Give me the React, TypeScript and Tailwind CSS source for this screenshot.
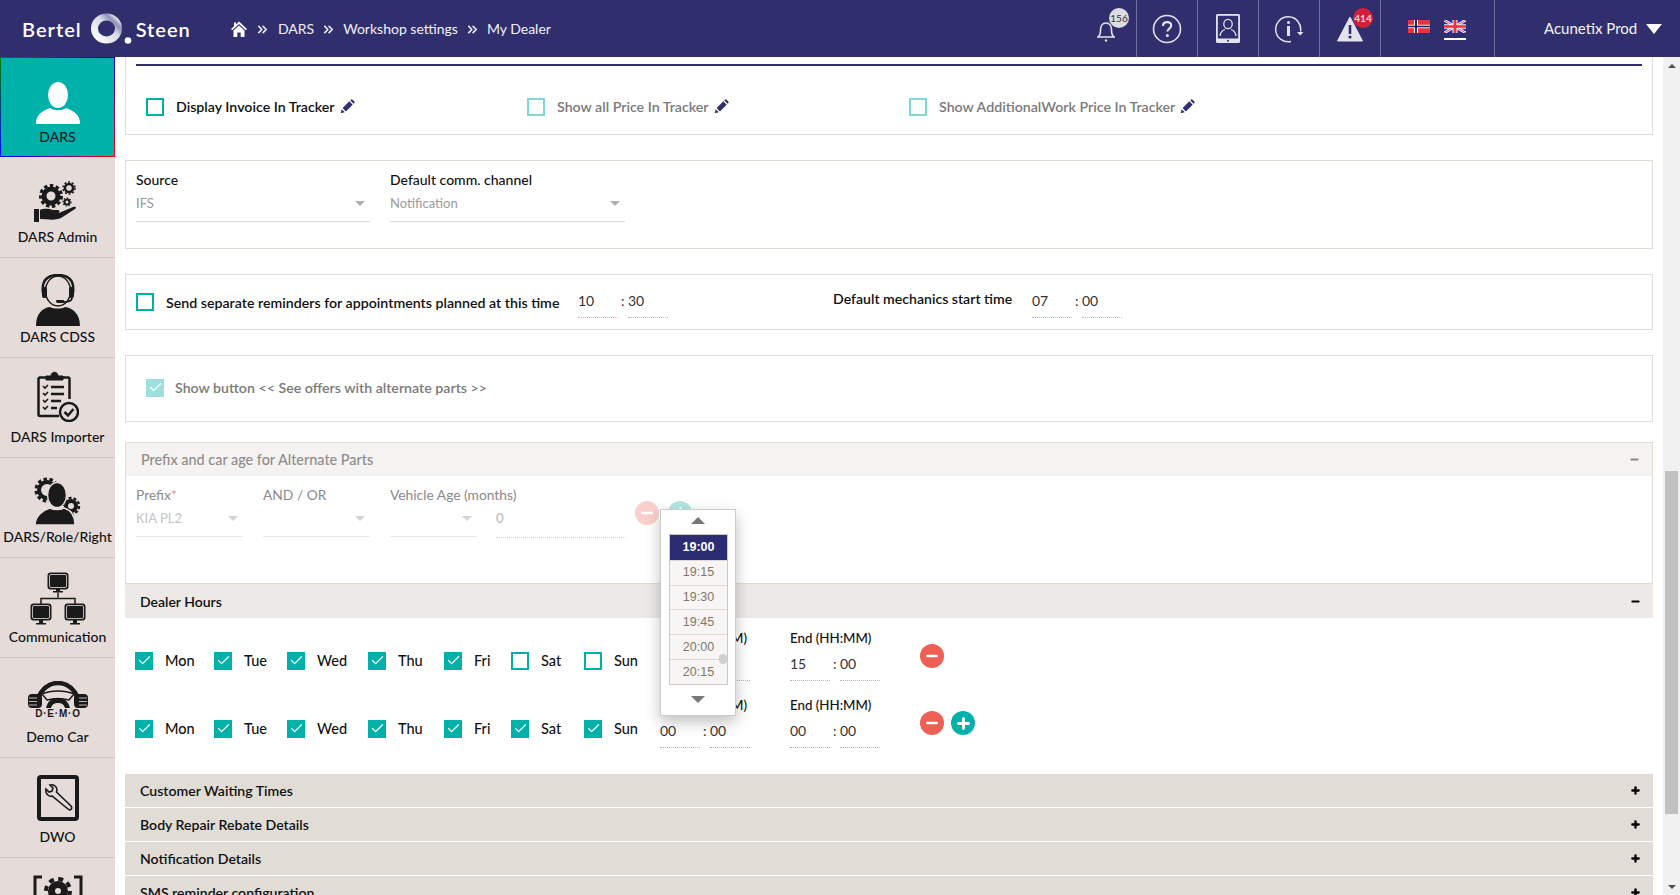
import React from "react";
import { Minus, Plus, Check, ChevronsRight } from "lucide-react";

const FONT = "font-['Lato','Noto_Sans',sans-serif]";

function Bell() {
  return (
    <svg width="18" height="26" viewBox="0 0 18 26" fill="none" stroke="#e3e3ee" strokeWidth="1.6">
      <path d="M1 20c2-1.5 2.5-3 2.5-7 0-4 2-7 5.5-7s5.5 3 5.5 7c0 4 .5 5.5 2.500 7z" />
      <circle cx="9" cy="23.5" r="1.2" fill="#e3e3ee" stroke="none" />
    </svg>
  );
}

function Help() {
  return (
    <svg width="30" height="30" viewBox="0 0 30 30" fill="none" stroke="#e3e3ee" strokeWidth="1.6">
      <circle cx="15" cy="15" r="13.5" />
      <path d="M11 12c0-2.5 2-3.800 4.200-3.800 2.300 0 4 1.400 4 3.400 0 3-3.800 3-3.800 6" strokeWidth="2.2" />
      <circle cx="15.4" cy="21.5" r="1.5" fill="#e3e3ee" stroke="none" />
    </svg>
  );
}

function Tablet() {
  return (
    <svg width="24" height="29" viewBox="0 0 24 29">
      <rect x="0" y="0" width="24" height="29" rx="1.5" fill="#e3e3ee" />
      <rect x="1.8" y="1.8" width="20.4" height="22.7" fill="#312e6e" />
      <circle cx="12" cy="26.8" r="1" fill="#312e6e" />
      <g fill="none" stroke="#e3e3ee" strokeWidth="1.3">
        <ellipse cx="12" cy="10" rx="4.2" ry="4.7" />
        <path d="M4 22c.5-4 3.500-6 5-6.500M20 22c-.5-4-3.500-6-5-6.500" />
      </g>
    </svg>
  );
}

function InfoLoop() {
  return (
    <svg width="29" height="28" viewBox="0 0 29 28" fill="none" stroke="#e3e3ee" strokeWidth="1.5">
      <path d="M25.5 16.5A12.5 12.5 0 1 0 16 26.500" />
      <path d="M22 17h6.500l-3.200 3.500z" fill="#e3e3ee" stroke="none" />
      <circle cx="13.5" cy="7.5" r="1.5" fill="#e3e3ee" stroke="none" />
      <rect x="12" y="11" width="3" height="10" fill="#e3e3ee" stroke="none" />
    </svg>
  );
}

function Warn() {
  return (
    <svg width="26" height="26" viewBox="0 0 26 26">
      <path d="M13 1 L25.5 25 H.5Z" fill="#e3e3ee" stroke="#e3e3ee" strokeLinejoin="round" />
      <rect x="11.7" y="9" width="2.6" height="9" fill="#312e6e" />
      <circle cx="13" cy="21" r="1.6" fill="#312e6e" />
    </svg>
  );
}

function FlagNo() {
  return (
    <svg width="22" height="13" viewBox="0 0 22 15" preserveAspectRatio="none">
      <rect width="22" height="15" fill="#e5343e" />
      <rect x="6" width="4" height="15" fill="#fff" />
      <rect y="5.5" width="22" height="4" fill="#fff" />
      <rect x="7" width="2" height="15" fill="#1d2a66" />
      <rect y="6.5" width="22" height="2" fill="#1d2a66" />
    </svg>
  );
}

function FlagUk() {
  return (
    <svg width="22" height="13" viewBox="0 0 22 15" preserveAspectRatio="none" className="block">
      <rect width="22" height="15" fill="#1c2bb0" />
      <path d="M0 0L22 15M22 0L0 15" stroke="#fff" strokeWidth="3" />
      <path d="M0 0L22 15M22 0L0 15" stroke="#e5343e" strokeWidth="1" />
      <rect x="8.5" width="5" height="15" fill="#fff" />
      <rect y="5" width="22" height="5" fill="#fff" />
      <rect x="9.5" width="3" height="15" fill="#e5343e" />
      <rect y="6" width="22" height="3" fill="#e5343e" />
    </svg>
  );
}

function HomeIcon() {
  return (
    <svg width="16" height="16" viewBox="0 0 16 16" fill="#fff">
      <path d="M8 .5 16 8l-1.200 1.200L8 3 1.200 9.200 0 8l3-2.800V1.500h2v1.900z" />
      <path d="M8 4.500 13.500 9.500V16h-3.800v-4.500H6.300V16H2.500V9.500z" />
    </svg>
  );
}

function Logo() {
  return (
    <div className="flex items-center text-[20px] font-semibold leading-none tracking-[1px] text-white">
      <span>Bertel</span>
      <svg width="44" height="32" viewBox="0 0 44 32" className="ml-[9px] mr-[1px]">
        <defs>
          <linearGradient id="ring" x1="0" y1="1" x2="1" y2="0">
            <stop offset="0" stopColor="#ffffff" />
            <stop offset="0.6" stopColor="#d8d8e8" />
            <stop offset="0.8" stopColor="#8f8fb8" />
            <stop offset="1" stopColor="#ffffff" />
          </linearGradient>
        </defs>
        <ellipse cx="15.5" cy="15.5" rx="12" ry="11.5" fill="none" stroke="url(#ring)" strokeWidth="7" />
        <circle cx="37" cy="27.5" r="3.3" fill="#fff" />
      </svg>
      <span>Steen</span>
    </div>
  );
}

function TopBar() {
  const cell = "relative flex h-full w-[61px] items-center justify-center border-r border-[#6f6e9d]";
  const sep = "mx-[7px] mt-[2px]";
  return (
    <header className="flex h-[57px] shrink-0 items-center bg-[#312e6e] text-white">
      <div className="flex w-[231px] pl-[22px]">
        <Logo />
      </div>
      <nav className="flex items-center text-[14px] text-[#f1f1f7]">
        <HomeIcon />
        <ChevronsRight size={15} className="mx-[8px] mt-[2px]" strokeWidth={2.5} />
        <span>DARS</span>
        <ChevronsRight size={15} className={sep} strokeWidth={2.5} />
        <span>Workshop settings</span>
        <ChevronsRight size={15} className={sep} strokeWidth={2.5} />
        <span>My Dealer</span>
      </nav>
      <div className="ml-auto flex h-full items-center">
        <div className={cell}>
          <div className="mt-[3px]">
            <Bell />
          </div>
          <span className="absolute right-[7px] top-[8px] flex h-[20px] w-[20px] items-center justify-center rounded-full bg-[#dcdce4] text-[10px] text-[#333]">
            156
          </span>
        </div>
        <div className={cell}>
          <Help />
        </div>
        <div className={cell}>
          <Tablet />
        </div>
        <div className={cell}>
          <InfoLoop />
        </div>
        <div className={cell}>
          <Warn />
          <span className="absolute right-[7px] top-[8px] flex h-[20px] w-[20px] items-center justify-center rounded-full bg-[#d3203a] text-[10px] font-bold text-[#f0d9dd]">
            414
          </span>
        </div>
        <div className="flex h-full w-[114px] items-start gap-[14px] border-r border-[#6f6e9d] pl-[27px] pt-[20px]">
          <FlagNo />
          <div className="border-b-2 border-white pb-[5px]">
            <FlagUk />
          </div>
        </div>
        <div className="flex w-[185px] items-center pl-[49px] text-[15px] text-[#f4f4f8]">
          <span>Acunetix Prod</span>
          <span className="ml-[9px] h-0 w-0 border-x-[8px] border-t-[10px] border-x-transparent border-t-white" />
        </div>
      </div>
    </header>
  );
}

const icons: Record<string, React.ReactNode> = {
  admin: (
    <svg width="48" height="42" viewBox="0 0 48 42" fill="#1a1a1a" className="mb-[4px]">
      <circle cx="17" cy="15" r="7" fill="none" stroke="#1a1a1a" strokeWidth="5" />
      <circle cx="17" cy="15" r="10.5" fill="none" stroke="#1a1a1a" strokeWidth="3" strokeDasharray="3.5 2.5" />
      <circle cx="35" cy="7" r="4" fill="none" stroke="#1a1a1a" strokeWidth="2.5" />
      <circle cx="35" cy="7" r="6" fill="none" stroke="#1a1a1a" strokeWidth="1.5" strokeDasharray="2 1.8" />
      <circle cx="33" cy="21" r="2.5" fill="none" stroke="#1a1a1a" strokeWidth="2" />
      <circle cx="33" cy="21" r="4" fill="none" stroke="#1a1a1a" strokeWidth="1.2" strokeDasharray="1.5 1.5" />
      <path d="M0 28h5v13H0zM6 29c5-2 9-1 13 0h5c2 0 2 3 0 3h-6 7l14-6c3-1 4 1 2 2L27 37c-7 3-14 1-21 1z" />
    </svg>
  ),
  cdss: (
    <svg width="44" height="52" viewBox="0 0 44 52" fill="#1a1a1a" className="mb-[1px]">
      <path d="M0 52c0-12 6-18 14-19 3 2 12 2 15 0 8 1 15 7 15 19H1z" />
      <ellipse cx="22" cy="17" rx="12.5" ry="15" fill="none" stroke="#1a1a1a" strokeWidth="1.5" />
      <path d="M7 19C5 5 13 1 22 1s17 4 15 18" fill="none" stroke="#1a1a1a" strokeWidth="2.5" />
      <rect x="6" y="13" width="5" height="11" rx="2" />
      <rect x="33" y="13" width="5" height="11" rx="2" />
      <path d="M36 24c0 3-4 4-9 4h-6" fill="none" stroke="#1a1a1a" strokeWidth="1.8" />
      <rect x="20" y="26" width="8" height="2.5" rx="1" />
    </svg>
  ),
  importer: (
    <svg width="42" height="52" viewBox="0 0 42 52" fill="none" stroke="#1a1a1a" className="mb-[5px]">
      <path d="M22 46H3a1.500 1.500 0 0 1-1.500-1.500V9A1.500 1.500 0 0 1 3 7.500h28A1.500 1.500 0 0 1 32.500 9v20" strokeWidth="2.5" />
      <path d="M9 10V6h5c0-5 7-5 7 0h5v4z" fill="#1a1a1a" strokeWidth="1" />
      <path d="M6 16l2 2 3-3M6 23l2 2 3-3M6 30l2 2 3-3M6 37l2 2 3-3" strokeWidth="1.6" />
      <path d="M14 17h13M14 24h13M14 31h10M14 38h6" strokeWidth="2.4" />
      <circle cx="32" cy="42" r="9" fill="#e5dcd9" strokeWidth="2.5" />
      <path d="M27.500 42l3.500 3.500 5.500-6.500" strokeWidth="2.5" />
    </svg>
  ),
  role: (
    <svg width="47" height="48" viewBox="0 0 47 48" fill="#1a1a1a" className="mb-[2px]">
      <circle cx="13" cy="13" r="8" fill="none" stroke="#1a1a1a" strokeWidth="4" />
      <circle cx="13" cy="13" r="11" fill="none" stroke="#1a1a1a" strokeWidth="3" strokeDasharray="3.5 2.5" />
      <circle cx="37" cy="29" r="5" fill="none" stroke="#1a1a1a" strokeWidth="4" />
      <circle cx="37" cy="29" r="8" fill="none" stroke="#1a1a1a" strokeWidth="2.5" strokeDasharray="3 2" />
      <ellipse cx="23" cy="18" rx="9.5" ry="12.5" stroke="#e5dcd9" strokeWidth="1.5" />
      <path d="M1 48c0-9 8-15 15-17 4 2 10 2 14 0 7 2 11 8 11 17z" stroke="#e5dcd9" strokeWidth="1.5" />
    </svg>
  ),
  comm: (
    <svg width="60" height="54" viewBox="0 0 60 54" fill="#1a1a1a" className="mb-[1px]">
      <rect x="20" y="1" width="20" height="16" rx="2" stroke="#1a1a1a" />
      <rect x="21.5" y="2.500" width="17" height="13" rx="1.5" fill="none" stroke="#e5dcd9" strokeWidth=".8" />
      <path d="M28 17h4v2h3v1.500H25V19h3z" />
      <path d="M30 20.500v5M13 32v-5.500h34V32" fill="none" stroke="#1a1a1a" strokeWidth="1.5" />
      <rect x="3" y="32" width="20" height="16" rx="2" stroke="#1a1a1a" />
      <rect x="4.5" y="33.500" width="17" height="13" rx="1.5" fill="none" stroke="#e5dcd9" strokeWidth=".8" />
      <path d="M11 48h4v3h3v1.500H8V51h3z" />
      <rect x="37" y="32" width="20" height="16" rx="2" stroke="#1a1a1a" />
      <rect x="38.5" y="33.500" width="17" height="13" rx="1.5" fill="none" stroke="#e5dcd9" strokeWidth=".8" />
      <path d="M45 48h4v3h3v1.500H42V51h3z" />
    </svg>
  ),
  demo: (
    <svg width="62" height="40" viewBox="0 0 62 40" fill="#1a1a1a" className="mb-[6px]">
      <path d="M11 17C16 6 23 2 31 2s15 4 20 15" fill="none" stroke="#1a1a1a" strokeWidth="4.5" />
      <path d="M15 13c9-4 23-4 32 0l-5 6c-7-2-15-2-22 0z" fill="#e5dcd9" stroke="#1a1a1a" strokeWidth="1.5" />
      <path d="M19 27c2-8 7-10 12-10s10 2 12 10h-5c-1-4-4-5-7-5s-6 1-7 5z" />
      <rect x="1" y="13" width="14" height="14" rx="4" />
      <rect x="47" y="13" width="14" height="14" rx="4" />
      <path d="M2 17h8M2 20.500h8M2 24h8M52 17h8M52 20.500h8M52 24h8" stroke="#e5dcd9" strokeWidth=".8" />
      <text x="31" y="36" textAnchor="middle" fontSize="10" fontWeight="900" fontFamily="'Liberation Sans',sans-serif" letterSpacing=".8">
        D·E·M·O
      </text>
    </svg>
  ),
  dwo: (
    <svg width="42" height="46" viewBox="0 0 42 46" fill="none" stroke="#1a1a1a" className="mb-[6px]">
      <rect x="2" y="2" width="38" height="42" rx="2" strokeWidth="4" />
      <path d="M9 14l3 3 3-1 1-3-3-3c3-1 7 1 7 5l-.5 2L34 31c2 3-1 5-3 3L15 21c-3 1-7-2-6-7z" fill="#e5dcd9" strokeWidth="1.600" />
    </svg>
  ),
  gear: (
    <svg width="50" height="30" viewBox="0 0 50 30" fill="none" stroke="#1a1a1a">
      <path d="M9 2H2v28M41 2h7v28" strokeWidth="3" />
      <circle cx="25" cy="16" r="6.5" strokeWidth="7" />
      <circle cx="25" cy="16" r="12" strokeWidth="4" strokeDasharray="5 4.4" />
    </svg>
  ),
};

function NavItem({ icon, label, first }: { icon: string; label: string; first?: boolean }) {
  return (
    <div className={`flex h-[100px] shrink-0 flex-col items-center border-b border-[#cfc8c4] ${first ? "mt-px" : ""}`}>
      <div className="flex h-[69px] items-end justify-center">{icons[icon]}</div>
      <span className="text-[14px] font-medium leading-[20px] text-[#111]">{label}</span>
    </div>
  );
}

function SideBar() {
  return (
    <aside className="flex h-full w-[115px] shrink-0 flex-col overflow-hidden bg-[#e5dcd9]">
      <div className="h-[100px] shrink-0 bg-[linear-gradient(135deg,#008000,#0000ff_50%,#ff0000)] p-px">
        <div className="flex h-full flex-col items-center bg-[#00b1aa]">
          <svg width="44" height="42" viewBox="0 0 44 42" fill="#fff" className="mt-[24px]">
            <ellipse cx="22" cy="13" rx="10" ry="13" />
            <path d="M0 41c0-7 5-12 14-15 4 3 12 3 16 0 9 3 14 8 14 15 0 .5-.5 1-1 1H1c-.5 0-1-.5-1-1z" />
          </svg>
          <span className="mt-[3px] text-[14px] font-medium leading-[20px] text-[#0b1a1a]">DARS</span>
        </div>
      </div>
      <NavItem icon="admin" label="DARS Admin" first />
      <NavItem icon="cdss" label="DARS CDSS" />
      <NavItem icon="importer" label="DARS Importer" />
      <NavItem icon="role" label="DARS/Role/Right" />
      <NavItem icon="comm" label="Communication" />
      <NavItem icon="demo" label="Demo Car" />
      <NavItem icon="dwo" label="DWO" />
      <div className="flex shrink-0 justify-center pt-[17px]">{icons.gear}</div>
    </aside>
  );
}

function Box({ state = "off", dim = false }: { state?: "off" | "on"; dim?: boolean }) {
  if (state === "on") {
    return (
      <span className={`flex h-[18px] w-[18px] shrink-0 items-center justify-center ${dim ? "bg-[#9be0dc]" : "bg-[#00b1aa]"}`}>
        <Check size={15} color="#fff" strokeWidth={2} />
      </span>
    );
  }
  return <span className={`h-[18px] w-[18px] shrink-0 border-2 ${dim ? "border-[#7fd8d4]" : "border-[#00b1aa]"}`} />;
}

function Edit() {
  return (
    <svg width="15" height="15" viewBox="0 0 16 16" fill="#312e6e" className="ml-[5px]">
      <path d="M.8 15.200l1-4.300 3.300 3.300zM2.800 9.700 10 2.500 13.500 6l-7.200 7.200zM11 1.500l.8-.8c.5-.5 1-.5 1.500 0l2 2c.5.5.5 1 0 1.500l-.8.8z" />
    </svg>
  );
}

function Flag({ label, dim, width }: { label: string; dim?: boolean; width: string }) {
  return (
    <div className={`flex items-center ${width}`}>
      <Box dim={dim} />
      <span className={`ml-[12px] text-[14.2px] font-semibold ${dim ? "text-[#7a7a7a]" : "text-[#111]"}`}>{label}</span>
      <Edit />
    </div>
  );
}

function Select({ label, value, width, dim, req }: { label: string; value: string; width: string; dim?: boolean; req?: boolean }) {
  return (
    <div className={`flex flex-col ${width}`}>
      <span className={`h-[20px] whitespace-nowrap leading-[20px] ${dim ? "text-[13.8px] text-[#8a8a8a]" : "text-[14px] font-medium text-[#111]"}`}>
        {label}
        {req && <span className="text-[#e98a8a]">*</span>}
      </span>
      <div className={`mt-[3px] flex h-[29px] items-start justify-between border-b ${dim ? "border-[#e9e9e9]" : "border-[#d9d9d9]"} pr-[5px]`}>
        <span className={`text-[13px] leading-[20px] ${dim ? "text-[#c4c4c4]" : "text-[#9a9a9a]"}`}>{value}</span>
        <span className={`mt-[8px] h-0 w-0 border-x-[5px] border-t-[5px] border-x-transparent ${dim ? "border-t-[#d4d4d4]" : "border-t-[#b0b0b0]"}`} />
      </div>
    </div>
  );
}

function TimeCells({ h, m }: { h: string; m: string }) {
  return (
    <div className="flex items-start text-[14px] leading-[20px] text-[#333]">
      <span className="h-[27px] w-[40px] border-b border-dotted border-[#b9b0a8]">{h}</span>
      <span className="w-[10px] pl-[3px]">:</span>
      <span className="h-[27px] w-[40px] border-b border-dotted border-[#b9b0a8]">{m}</span>
    </div>
  );
}

function Day({ name, on, width }: { name: string; on: boolean; width: string }) {
  return (
    <div className={`flex items-center ${width}`}>
      <Box state={on ? "on" : "off"} />
      <span className="ml-[12px] text-[14.5px] font-medium text-[#111]">{name}</span>
    </div>
  );
}

const dayCols = [
  ["Mon", "w-[79px]"],
  ["Tue", "w-[73px]"],
  ["Wed", "w-[81px]"],
  ["Thu", "w-[76px]"],
  ["Fri", "w-[67px]"],
  ["Sat", "w-[73px]"],
  ["Sun", "w-[76px]"],
];

function HoursRow({ sat, start, end, add }: { sat: boolean; start: string[]; end: string[]; add?: boolean }) {
  return (
    <div className="flex h-[67px] items-start pl-[10px]">
      <div className={`flex ${add ? "pt-[23px]" : "pt-[22px]"}`}>
        {dayCols.map(([d, w]) => (
          <Day key={d} name={d} width={w} on={d === "Sat" || d === "Sun" ? sat : true} />
        ))}
      </div>
      <div className="w-[130px]">
        <div className="h-[20px] text-[13.3px] font-medium leading-[20px] text-[#111]">Start (HH:MM)</div>
        <div className="mt-[6px]">
          <TimeCells h={start[0]} m={start[1]} />
        </div>
      </div>
      <div className="w-[130px]">
        <div className="h-[20px] text-[13.3px] font-medium leading-[20px] text-[#111]">End (HH:MM)</div>
        <div className="mt-[6px]">
          <TimeCells h={end[0]} m={end[1]} />
        </div>
      </div>
      <div className="flex gap-[7px] pt-[16px]">
        <span className="flex h-[24px] w-[24px] items-center justify-center rounded-full bg-[#ee5f55]">
          <Minus size={16} color="#fff" strokeWidth={4} />
        </span>
        {add && (
          <span className="flex h-[24px] w-[24px] items-center justify-center rounded-full bg-[#00b1aa]">
            <Plus size={17} color="#fff" strokeWidth={4} />
          </span>
        )}
      </div>
    </div>
  );
}

function Bar({ title }: { title: string }) {
  return (
    <div className="mb-px flex h-[33px] shrink-0 items-center justify-between bg-[#e1dcd6] pl-[15px] pr-[12px]">
      <span className="text-[14.1px] font-semibold text-[#111]">{title}</span>
      <Plus size={11} color="#000" strokeWidth={5} />
    </div>
  );
}

function TimePopup() {
  const times = ["19:15", "19:30", "19:45", "20:00", "20:15"];
  return (
    <div className="absolute left-[545px] top-[452px] z-10 h-[207px] w-[76px] border border-[#ccc] bg-white font-['Liberation_Sans',sans-serif] shadow-[0_6px_14px_rgba(0,0,0,0.25)]">
      <div className="mb-[4px] flex h-[20px] items-center justify-center">
        <span className="h-0 w-0 border-x-[7px] border-b-[7px] border-x-transparent border-b-[#777]" />
      </div>
      <div className="relative mx-[8px] w-[59px] border border-[#cdc7c2]">
        <div className="flex h-[24.8px] items-center justify-center bg-[#2c2c73] text-[12.5px] font-bold text-white">19:00</div>
        {times.map((t) => (
          <div key={t} className="flex h-[24.8px] items-center justify-center border-t border-[#e1d9d2] bg-[#f8f6f4] text-[12.5px] text-[#80766c]">
            {t}
          </div>
        ))}
        <span className="absolute right-0 top-[119px] h-[10px] w-[8px] rounded-[4px] bg-[#cfcfcf]" />
      </div>
      <div className="flex h-[30px] items-center justify-center">
        <span className="h-0 w-0 border-x-[7px] border-t-[7px] border-x-transparent border-t-[#777]" />
      </div>
    </div>
  );
}

function ScrollBar() {
  return (
    <div className="flex h-full w-[17px] shrink-0 flex-col bg-[#f1f1f1]">
      <div className="flex h-[17px] items-center justify-center">
        <span className="h-0 w-0 border-x-[4px] border-b-[4px] border-x-transparent border-b-[#505050]" />
      </div>
      <div className="mx-[2px] mt-[397px] h-[343px] bg-[#c1c1c1]" />
      <div className="mt-auto flex h-[17px] items-center justify-center">
        <span className="h-0 w-0 border-x-[4px] border-t-[4px] border-x-transparent border-t-[#505050]" />
      </div>
    </div>
  );
}

export default function App() {
  return (
    <div className={`flex h-screen w-full flex-col overflow-hidden bg-white ${FONT}`}>
      <TopBar />
      <div className="flex min-h-0 flex-1">
        <SideBar />
        <main className="relative min-w-0 flex-1 overflow-hidden px-[10px]">
          <section className="h-[78px] border-x border-b border-[#e3dcd5] px-[10px] pt-[7px]">
            <div className="h-[2px] bg-[#312e6e]" />
            <div className="flex pl-[10px] pt-[30px]">
              <Flag label="Display Invoice In Tracker" width="w-[381px]" />
              <Flag label="Show all Price In Tracker" width="w-[382px]" dim />
              <Flag label="Show AdditionalWork Price In Tracker" width="w-[400px]" dim />
            </div>
          </section>

          <section className="mt-[25px] flex h-[89px] gap-[20px] border border-[#e3dcd5] pl-[10px] pt-[9px]">
            <Select label="Source" value="IFS" width="w-[234px]" />
            <Select label="Default comm. channel" value="Notification" width="w-[235px]" />
          </section>

          <section className="mt-[25px] flex h-[56px] items-start border border-[#e3dcd5] pl-[10px] pt-[18px]">
            <Box />
            <span className="-mt-px ml-[12px] w-[412px] text-[14.2px] font-semibold text-[#111]">Send separate reminders for appointments planned at this time</span>
            <div className="-mt-[2px]">
              <TimeCells h="10" m="30" />
            </div>
            <span className="-mt-[5px] ml-[165px] w-[199px] text-[14.1px] font-semibold text-[#111]">Default mechanics start time</span>
            <div className="-mt-[2px]">
              <TimeCells h="07" m="00" />
            </div>
          </section>

          <section className="mt-[25px] flex h-[67px] items-center border border-[#e3dcd5] pb-[2px] pl-[20px]">
            <Box state="on" dim />
            <span className="ml-[11px] text-[14.2px] font-semibold text-[#7a7a7a]">{"Show button << See offers with alternate parts >>"}</span>
          </section>

          <section className="mt-[20px] h-[142px] border border-[#e3dcd5]">
            <div className="flex h-[33px] items-center justify-between bg-[#f5f3f1] pl-[15px] pr-[12px]">
              <span className="text-[14.4px] font-medium text-[#8d8d8d]">Prefix and car age for Alternate Parts</span>
              <Minus size={11} color="#888" strokeWidth={4} />
            </div>
            <div className="flex items-start pl-[10px] pt-[9px]">
              <Select label="Prefix" req value="KIA PL2" width="w-[107px]" dim />
              <div className="ml-[20px]">
                <Select label="AND / OR" value="" width="w-[107px]" dim />
              </div>
              <div className="ml-[20px]">
                <Select label="Vehicle Age (months)" value="" width="w-[87px]" dim />
              </div>
              <div className="ml-[19px] mt-[23px] h-[30px] w-[130px] border-b border-dotted border-[#cfcfcf] text-[13px] leading-[20px] text-[#b5b5b5]">0</div>
              <span className="ml-[9px] mt-[16px] flex h-[24px] w-[24px] items-center justify-center rounded-full bg-[#f9cfcc]">
                <Minus size={16} color="#fff" strokeWidth={4} />
              </span>
              <span className="ml-[9px] mt-[16px] flex h-[24px] w-[24px] items-center justify-center rounded-full bg-[#b3e7e4]">
                <Plus size={17} color="#fff" strokeWidth={4} />
              </span>
            </div>
          </section>

          <section className="h-[190px]">
            <div className="flex h-[34px] items-center justify-between bg-[#ede9e6] pl-[15px] pr-[12px]">
              <span className="text-[14px] font-semibold text-[#111]">Dealer Hours</span>
              <Minus size={11} color="#000" strokeWidth={4} />
            </div>
            <div className="pt-[10px]">
              <HoursRow sat={false} start={["07", "00"]} end={["15", "00"]} />
              <HoursRow sat start={["00", "00"]} end={["00", "00"]} add />
            </div>
          </section>

          <div className="flex flex-col">
            <Bar title="Customer Waiting Times" />
            <Bar title="Body Repair Rebate Details" />
            <Bar title="Notification Details" />
            <Bar title="SMS reminder configuration" />
          </div>

          <TimePopup />
        </main>
        <ScrollBar />
      </div>
    </div>
  );
}
